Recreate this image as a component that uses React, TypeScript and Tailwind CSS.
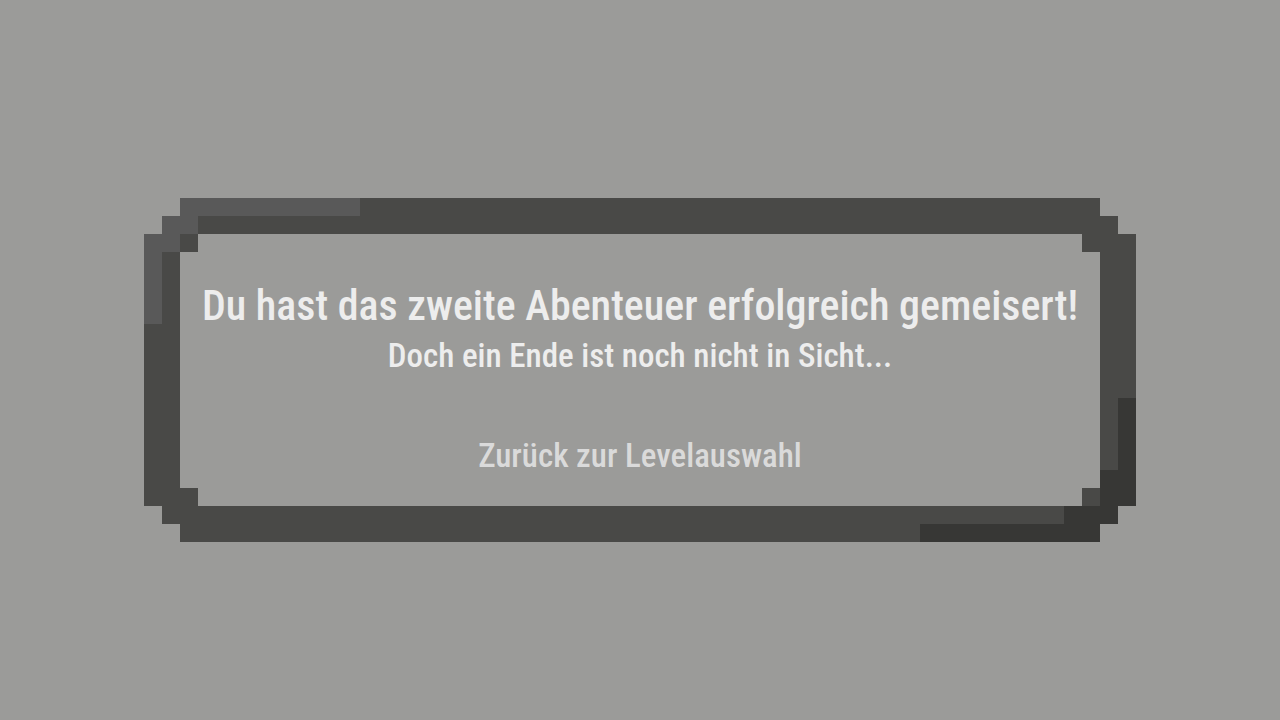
import type { ReactNode } from "react";

const outerShape =
  "[clip-path:polygon(36px_0,calc(100%-36px)_0,calc(100%-36px)_18px,calc(100%-18px)_18px,calc(100%-18px)_36px,100%_36px,100%_calc(100%-36px),calc(100%-18px)_calc(100%-36px),calc(100%-18px)_calc(100%-18px),calc(100%-36px)_calc(100%-18px),calc(100%-36px)_100%,36px_100%,36px_calc(100%-18px),18px_calc(100%-18px),18px_calc(100%-36px),0_calc(100%-36px),0_36px,18px_36px,18px_18px,36px_18px)]";

const innerShape =
  "[clip-path:polygon(18px_0,calc(100%-18px)_0,calc(100%-18px)_18px,100%_18px,100%_calc(100%-18px),calc(100%-18px)_calc(100%-18px),calc(100%-18px)_100%,18px_100%,18px_calc(100%-18px),0_calc(100%-18px),0_18px,18px_18px)]";

// Light blocks sit in the top left corner, dark blocks in the bottom right one.
const shading =
  "bg-no-repeat [background-image:linear-gradient(#595959,#595959),linear-gradient(#595959,#595959),linear-gradient(#595959,#595959),linear-gradient(#595959,#595959),linear-gradient(#373735,#373735),linear-gradient(#373735,#373735),linear-gradient(#373735,#373735),linear-gradient(#373735,#373735)] [background-size:180px_18px,36px_18px,36px_18px,18px_72px,18px_108px,36px_36px,54px_18px,180px_18px] [background-position:36px_0,18px_18px,0_36px,0_54px,right_0_bottom_36px,right_0_bottom_36px,right_18px_bottom_18px,right_36px_bottom_0]";

function PixelFrame({ children }: { children: ReactNode }) {
  return (
    <section className={`w-full bg-[#494947] p-9 ${shading} ${outerShape}`}>
      <div
        className={`flex flex-col items-center bg-[#9b9b99] px-4 pt-11 pb-7 text-center ${innerShape}`}
      >
        {children}
      </div>
    </section>
  );
}

export default function App() {
  return (
    <main className="flex min-h-screen items-center bg-[#9b9b99] px-36 pt-5 font-['Roboto_Condensed','Liberation_Sans_Narrow','DejaVu_Sans_Condensed',sans-serif] font-medium text-[#ededed]">
      <PixelFrame>
        <h1 className="text-[42px] leading-[56px]">
          Du hast das zweite Abenteuer erfolgreich gemeisert!
        </h1>
        <p className="text-[33px] leading-[44px]">
          Doch ein Ende ist noch nicht in Sicht...
        </p>
        <button
          type="button"
          className="mt-14 cursor-pointer text-[33px] leading-[44px] text-[#dadada] hover:text-white"
        >
          Zurück zur Levelauswahl
        </button>
      </PixelFrame>
    </main>
  );
}
